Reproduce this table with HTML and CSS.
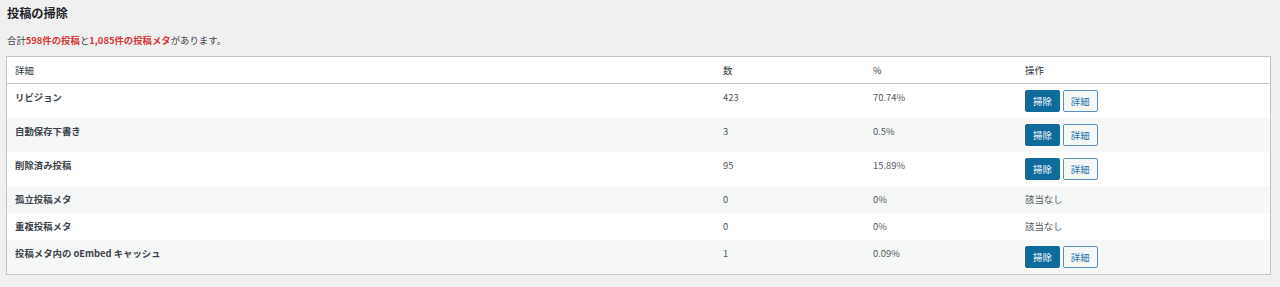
FILE: index.html
```html
<!DOCTYPE html>
<html lang="ja">
<head>
<meta charset="utf-8">
<title>投稿の掃除</title>
<link rel="stylesheet" href="styles.css">
</head>
<body>
<div class="wrap">
  <h2 class="title">投稿の掃除</h2>
  <p class="summary">合計<strong class="hl">598件の投稿</strong>と<strong class="hl">1,085件の投稿メタ</strong>があります。</p>
  <table class="list">
    <colgroup>
      <col class="c-name">
      <col class="c-count">
      <col class="c-pct">
      <col class="c-act">
    </colgroup>
    <thead>
      <tr><th>詳細</th><th>数</th><th>%</th><th>操作</th></tr>
    </thead>
    <tbody>
      <tr>
        <td class="name">リビジョン</td><td>423</td><td>70.74%</td>
        <td><div class="actions"><button class="btn primary">掃除</button><button class="btn secondary">詳細</button></div></td>
      </tr>
      <tr class="alt">
        <td class="name">自動保存下書き</td><td>3</td><td>0.5%</td>
        <td><div class="actions"><button class="btn primary">掃除</button><button class="btn secondary">詳細</button></div></td>
      </tr>
      <tr>
        <td class="name">削除済み投稿</td><td>95</td><td>15.89%</td>
        <td><div class="actions"><button class="btn primary">掃除</button><button class="btn secondary">詳細</button></div></td>
      </tr>
      <tr class="alt">
        <td class="name">孤立投稿メタ</td><td>0</td><td>0%</td><td>該当なし</td>
      </tr>
      <tr>
        <td class="name">重複投稿メタ</td><td>0</td><td>0%</td><td>該当なし</td>
      </tr>
      <tr class="alt">
        <td class="name">投稿メタ内の oEmbed キャッシュ</td><td>1</td><td>0.09%</td>
        <td><div class="actions"><button class="btn primary">掃除</button><button class="btn secondary">詳細</button></div></td>
      </tr>
    </tbody>
  </table>
</div>
</body>
</html>
```

FILE: styles.css
```css
html, body {
  margin: 0;
  padding: 0;
  background: #f0f0f1;
}
body {
  font-family: "Noto Sans CJK JP", "Noto Sans", sans-serif;
  font-size: 9.4px;
  color: #3c434a;
}
.wrap {
  padding: 0 9px 0 6px;
}
.title {
  margin: 0;
  padding: 5px 0 0 1px;
  font-size: 12.2px;
  line-height: 16px;
  font-weight: 700;
  color: #1d2327;
}
.summary {
  margin: 12px 0 0 1px;
  line-height: 14px;
}
.hl {
  color: #d63638;
  font-weight: 700;
}
.list {
  margin-top: 9px;
  width: 100%;
  border-collapse: separate;
  border-spacing: 0;
  background: #fff;
  border: 1px solid #c3c4c7;
  box-shadow: 0 1px 1px rgba(0,0,0,0.04);
}
.c-name { width: 708px; }
.c-count { width: 150px; }
.c-pct { width: 152px; }
.c-act { width: auto; }
.list th, .list td {
  text-align: left;
  vertical-align: top;
  padding: 6px 8px;
  line-height: 15px;
  font-weight: 400;
}
.list th {
  line-height: 14px;
  color: #2c3338;
  border-bottom: 1px solid #c3c4c7;
}
.list td {
  color: #50575e;
}
.list td.name {
  font-weight: 700;
  color: #3c434a;
}
.list tr.alt td {
  background: #f6f7f7;
}
.actions {
  display: flex;
  gap: 3px;
}
.btn {
  font-family: inherit;
  font-size: 9.4px;
  line-height: 20px;
  height: 22px;
  padding: 0 7px;
  border-radius: 2px;
  border: 1px solid #2271b1;
  cursor: pointer;
}
.btn.primary {
  background: #0f6b9c;
  border-color: #0f6b9c;
  color: #fff;
}
.btn.secondary {
  background: #f6f7f7;
  color: #2271b1;
  border-color: #5b8fbd;
}
```
